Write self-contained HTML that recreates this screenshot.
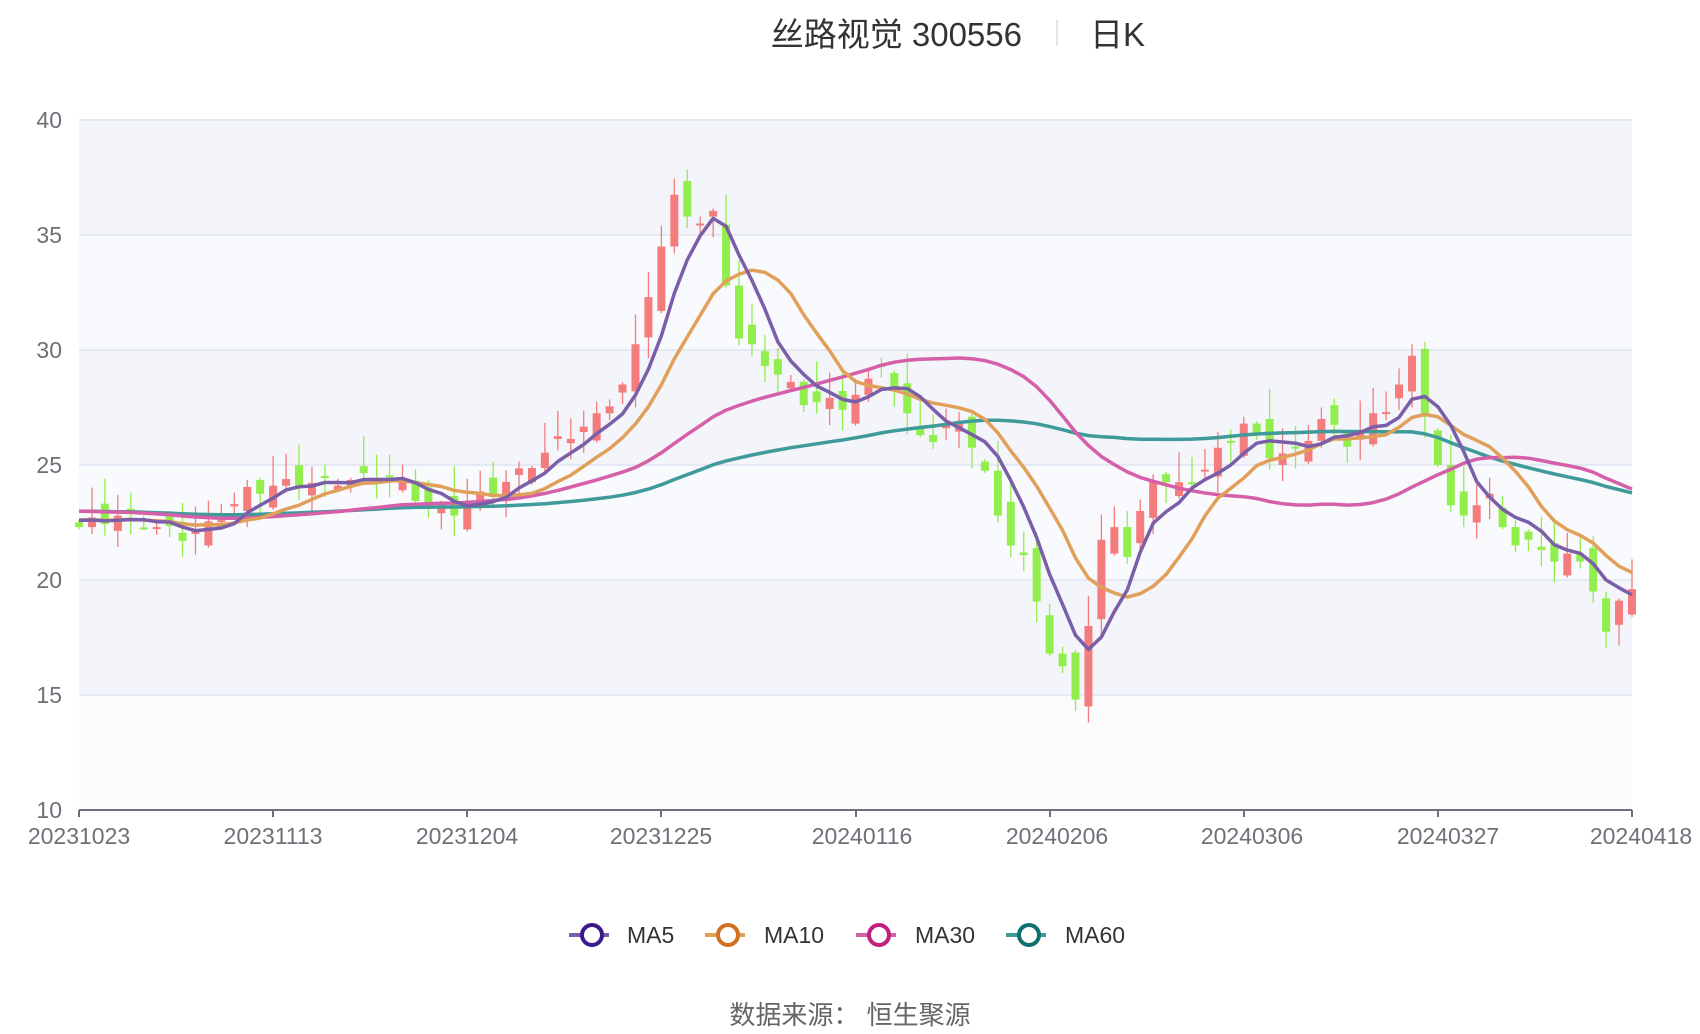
<!DOCTYPE html>
<html><head><meta charset="utf-8"><style>
html,body{margin:0;padding:0;background:#fff;}
svg{display:block}
text{font-family:"Liberation Sans","Noto Sans CJK SC",sans-serif;}
</style></head><body>
<svg id="s" width="1700" height="1034" xmlns="http://www.w3.org/2000/svg">
<rect x="79" y="120" width="1553" height="115" fill="#f3f5fa"/>
<rect x="79" y="235" width="1553" height="115" fill="#f9fafd"/>
<rect x="79" y="350" width="1553" height="115" fill="#f3f5fa"/>
<rect x="79" y="465" width="1553" height="115" fill="#f9fafd"/>
<rect x="79" y="580" width="1553" height="115" fill="#f3f5fa"/>
<rect x="79" y="695" width="1553" height="115" fill="#fbfbfe"/>
<g stroke="#dfe3f2" stroke-width="1.5">
<line x1="79" x2="1632" y1="120" y2="120"/><line x1="79" x2="1632" y1="235" y2="235"/>
<line x1="79" x2="1632" y1="350" y2="350"/><line x1="79" x2="1632" y1="465" y2="465"/>
<line x1="79" x2="1632" y1="580" y2="580"/><line x1="79" x2="1632" y1="695" y2="695"/>
</g>
<g font-size="23" fill="#6e7079" text-anchor="end">
<text x="62" y="128">40</text><text x="62" y="243">35</text><text x="62" y="358">30</text>
<text x="62" y="473">25</text><text x="62" y="588">20</text><text x="62" y="703">15</text><text x="62" y="818">10</text>
</g>
<g id="c"></g>
<g id="m"></g>
<line x1="79" x2="1632" y1="810" y2="810" stroke="#6e7079" stroke-width="2"/>
<g stroke="#6e7079" stroke-width="2" id="ticks"></g>
<g font-size="23" fill="#6e7079" text-anchor="middle">
<text x="79" y="844">20231023</text><text x="273" y="844">20231113</text><text x="467" y="844">20231204</text>
<text x="661" y="844">20231225</text><text x="862" y="844">20240116</text><text x="1057" y="844">20240206</text>
<text x="1252" y="844">20240306</text><text x="1448" y="844">20240327</text><text x="1641" y="844">20240418</text>
</g>
<text x="1022" y="46" font-size="33" fill="#333" text-anchor="end">丝路视觉 300556</text>
<line x1="1057" x2="1057" y1="20" y2="46" stroke="#e5e5e5" stroke-width="2"/>
<text x="1090" y="46" font-size="33" fill="#333">日K</text>
<g stroke-width="4" fill="#fff" font-size="23">
<line x1="569" x2="609" y1="935" y2="935" stroke="#7b5ea8"/><circle cx="592" cy="935" r="10" stroke="#3a1a8c"/>
<text x="627" y="943" fill="#333" stroke="none">MA5</text>
<line x1="705" x2="745" y1="935" y2="935" stroke="#e0a05a"/><circle cx="728" cy="935" r="10" stroke="#d07020"/>
<text x="764" y="943" fill="#333" stroke="none">MA10</text>
<line x1="856" x2="896" y1="935" y2="935" stroke="#d55fa8"/><circle cx="879" cy="935" r="10" stroke="#c02080"/>
<text x="915" y="943" fill="#333" stroke="none">MA30</text>
<line x1="1006" x2="1046" y1="935" y2="935" stroke="#3f9a9a"/><circle cx="1029" cy="935" r="10" stroke="#107070"/>
<text x="1065" y="943" fill="#333" stroke="none">MA60</text>
</g>
<text x="850" y="1024" font-size="26" fill="#666" text-anchor="middle">数据来源：  恒生聚源</text>
</svg>
<script>
var K=[[0,22.3],[3,22.8],[6,22.3],[8,21.9],[10,22.3],[13,23.8],[15,24.1],[20,24.3],[24,24.5],[27,23.2],[29,23],[31,23.6],[34,24.6],[37,26],[40,27],[42,28.5],[43,30],[44,32.5],[46,36.5],[48,35.5],[49,35.8],[50,33],[51,30.5],[53,29.5],[56,27.8],[59,27.6],[61,28.5],[62,29.5],[64,27],[66,26],[68,27],[70,24.5],[71,23],[72,21.5],[73.5,20.5],[75,16.8],[76,16],[77,15],[78,18],[79,21.5],[80,22.5],[81,21],[83,24.5],[85,24],[87,24.8],[89,26.2],[90,26.8],[92,25.5],[94,25.5],[96,27],[98,26],[101,27.5],[103,29.5],[104,27.3],[105,25],[106,23],[107,23],[109,23.5],[110,22.5],[111,21.5],[113,21.5],[114,20.8],[116,21],[117,19.5],[118,17.5],[119,19.3],[120,19.6]];
var C=[];for(var i=0;i<=120;i++){for(var j=0;j<K.length-1;j++)if(i>=K[j][0]&&i<=K[j+1][0]){var t=(i-K[j][0])/(K[j+1][0]-K[j][0]);C.push(K[j][1]+t*(K[j+1][1]-K[j][1])+(i%3==1?0.25:i%3==2?-0.2:0));break;}}
var H=[];for(i=0;i<60;i++)H.push(23+Math.sin(i/5)*0.4);
var A=H.concat(C);
function X(i){return 79+i*1553/120}function Y(p){return 810-(p-10)*23}
var g=document.getElementById('c'),s='';
for(i=0;i<=120;i++){var c=C[i],o=i?C[i-1]+((i*7)%5-2)*0.3:22.5,up=c>=o;var col=up?'#f47c7c':'#92ee4c';
var hi=Math.max(o,c)+((i*13)%7)*0.2+0.1,lo=Math.min(o,c)-((i*11)%5)*0.2-0.1;
s+='<line x1="'+X(i)+'" x2="'+X(i)+'" y1="'+Y(hi)+'" y2="'+Y(lo)+'" stroke="'+col+'" stroke-width="1.3"/>';
var y1=Y(Math.max(o,c)),h=Math.max(2,Y(Math.min(o,c))-y1);
s+='<rect x="'+(X(i)-4)+'" y="'+y1+'" width="8" height="'+h+'" fill="'+col+'"/>';}
g.innerHTML=s;
function ma(n,col){var d='';for(i=0;i<=120;i++){var k=i+60,sum=0;for(var j=0;j<n;j++)sum+=A[k-j];d+=(i?'L':'M')+X(i).toFixed(1)+' '+Y(sum/n).toFixed(1);}return '<path d="'+d+'" fill="none" stroke="'+col+'" stroke-width="3.5" stroke-linejoin="round"/>';}
document.getElementById('m').innerHTML=ma(60,'#3f9a9a')+ma(30,'#d55fa8')+ma(10,'#e0a05a')+ma(5,'#7b5ea8');
var tk='';[79,273,467,661,856,1050,1244,1438,1632].forEach(function(x){tk+='<line x1="'+x+'" x2="'+x+'" y1="810" y2="817"/>';});
document.getElementById('ticks').innerHTML=tk;
</script>
</body></html>
